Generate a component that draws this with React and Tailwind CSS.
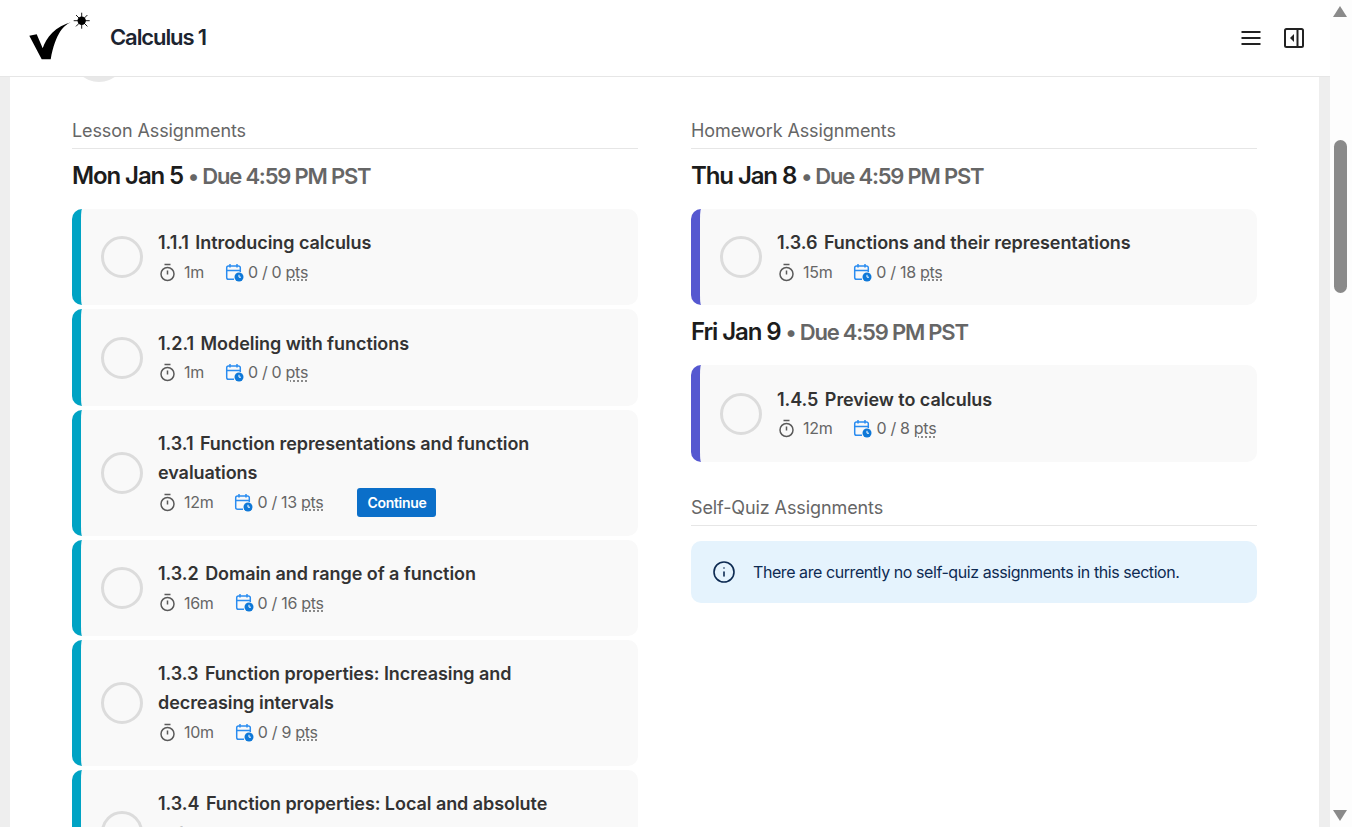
import React from 'react'
import { Info } from 'lucide-react'

const lessons = [
  { num: '1.1.1', title: 'Introducing calculus', time: '1m', pts: '0 / 0' },
  { num: '1.2.1', title: 'Modeling with functions', time: '1m', pts: '0 / 0' },
  { num: '1.3.1', title: 'Function representations and function evaluations', time: '12m', pts: '0 / 13', current: true },
  { num: '1.3.2', title: 'Domain and range of a function', time: '16m', pts: '0 / 16' },
  { num: '1.3.3', title: 'Function properties: Increasing and decreasing intervals', time: '10m', pts: '0 / 9' },
  { num: '1.3.4', title: 'Function properties: Local and absolute extrema', time: '14m', pts: '0 / 14' },
]

function Logo() {
  return (
    <svg width="64" height="48" viewBox="0 0 64 48" className="shrink-0 overflow-visible">
      <path d="M0.300 21.700 L7.700 20.300 L13.700 34.300 C17 24 26 12 43.700 7.700 C35 10 26.500 19 21.700 45.300 L12.700 45.300 Z" fill="#000" />
      <g stroke="#000" strokeWidth="0.900">
        <path d="M52.700 -1.300 L52.700 14.700" />
        <path d="M44.700 6.700 L60.700 6.700" />
        <path d="M47 1 L58.400 12.400" />
        <path d="M58.400 1 L47 12.400" />
      </g>
      <circle cx="52.700" cy="6.700" r="4.200" fill="#000" />
    </svg>
  )
}

function TimerIcon() {
  return (
    <svg width="19" height="19" viewBox="0 0 19 19" fill="none" stroke="#5a5a5a" strokeWidth="1.500" className="shrink-0">
      <path d="M6.500 1.500 H12.500" />
      <circle cx="9.500" cy="11" r="6.500" />
      <path d="M9.500 7.500 V11.500" />
    </svg>
  )
}

function CalendarIcon() {
  return (
    <svg width="19" height="19" viewBox="0 0 19 19" fill="none" className="shrink-0">
      <path d="M9 16.200 H3.500 A1.800 1.800 0 0 1 1.700 14.400 V4.800 A1.800 1.800 0 0 1 3.500 3 H13.500 A1.800 1.800 0 0 1 15.300 4.800 V9" stroke="#2a8cf0" strokeWidth="1.500" />
      <path d="M1.700 7.500 H15.300 M5 1 V4.500 M12 1 V4.500" stroke="#2a8cf0" strokeWidth="1.500" />
      <circle cx="14" cy="14" r="4.500" fill="#0e78d8" />
      <path d="M14 11.800 V14.200 H16" stroke="#fff" strokeWidth="1" />
    </svg>
  )
}

function Card({ item, bar }) {
  return (
    <div className={`flex rounded-[10px] overflow-hidden bg-[#f9f9f9] border-l-[9px] ${bar}`}>
      <div className="flex items-center pl-5 pr-[15px]">
        <div className="w-[42px] h-[42px] rounded-full border-[3.5px] border-[#dcdcdc] shrink-0" />
      </div>
      <div className="flex-1 pt-[19.3px] pb-[18.95px] pr-[72px]">
        <div className="text-[18px] leading-[29.2px] font-semibold text-[#333] tracking-[-0.06px]">
          <span className="mr-[6.5px]">{item.num}</span>{item.title}
        </div>
        <div className="flex items-center h-[29px] text-[16px] text-[#666] tracking-[-0.3px]">
          <TimerIcon />
          <span className="ml-[7px]">{item.time}</span>
          <span className="ml-[21px]"><CalendarIcon /></span>
          <span className="ml-[4px]">{item.pts} <span className="underline decoration-dotted underline-offset-2">pts</span></span>
          {item.current && (
            <button className="ml-[34px] h-[29px] w-[79px] rounded-[3px] bg-[#0b6fc9] text-white text-[14px] font-semibold">Continue</button>
          )}
        </div>
      </div>
    </div>
  )
}

function SectionTitle({ children }) {
  return <h2 className="text-[18px] leading-[27px] text-[#666] border-b border-[#e6e6e6] pb-[4px] tracking-[-0.1px]">{children}</h2>
}

function DueHeading({ day }) {
  return (
    <h3 className="text-[24px] leading-[36px] font-semibold text-[#1c1c1c] tracking-[-1.1px]">
      {day} <span className="text-[22px] font-semibold text-[#666] tracking-[-1.2px]">• Due 4:59 PM PST</span>
    </h3>
  )
}

export default function App() {
  return (
    <div className="flex h-[827px] overflow-hidden bg-white font-['Inter',sans-serif]">
      <div className="flex flex-col w-[1330px] h-full">
        <header className="flex items-center h-[77px] shrink-0 border-b border-[#e6e6e6] bg-white pl-[29px] pr-[26px]">
          <Logo />
          <span className="ml-[17px] -mt-[2px] text-[22px] font-semibold text-[#1c2430] tracking-[-1.1px]">Calculus 1</span>
          <div className="ml-auto flex items-center gap-[23px]">
            <svg width="20" height="14" viewBox="0 0 20 14" fill="none" stroke="#222" strokeWidth="1.800">
              <path d="M0.500 1 H19.500 M0.500 7 H19.500 M0.500 13 H19.500" />
            </svg>
            <svg width="20" height="20" viewBox="0 0 20 20" fill="none">
              <rect x="1" y="1" width="18" height="18" rx="1.500" stroke="#222" strokeWidth="2" />
              <path d="M13.500 1 V19" stroke="#222" strokeWidth="2" />
              <path d="M10 6 V14 L6 10 Z" fill="#222" />
            </svg>
          </div>
        </header>

        <div className="flex-1 min-h-0 overflow-hidden bg-[#eeeeee] pl-[10px] pr-[11px]">
          <div className="h-full bg-white overflow-hidden px-[62px]">
            <div className="h-[5px] overflow-hidden">
              <div className="w-[54px] h-[54px] rounded-full bg-[#e8e8e8] -mt-[49px]" />
            </div>
            <div className="grid grid-cols-2 gap-x-[53px] pt-[35px]">
              <div className="min-w-0">
                <SectionTitle>Lesson Assignments</SectionTitle>
                <div className="mt-[9px] mb-[15px]"><DueHeading day="Mon Jan 5" /></div>
                <div className="flex flex-col gap-1">
                  {lessons.map(l => <Card key={l.num} item={l} bar="border-[#00a3c4]" />)}
                </div>
              </div>
              <div className="min-w-0">
                <SectionTitle>Homework Assignments</SectionTitle>
                <div className="mt-[9px] mb-[15px]"><DueHeading day="Thu Jan 8" /></div>
                <Card item={{ num: '1.3.6', title: 'Functions and their representations', time: '15m', pts: '0 / 18' }} bar="border-[#5558d0]" />
                <div className="mt-[9px] mb-[15px]"><DueHeading day="Fri Jan 9" /></div>
                <Card item={{ num: '1.4.5', title: 'Preview to calculus', time: '12m', pts: '0 / 8' }} bar="border-[#5558d0]" />
                <div className="mt-[32px]"><SectionTitle>Self-Quiz Assignments</SectionTitle></div>
                <div className="mt-[15px] h-[62px] flex items-center rounded-[10px] bg-[#e5f3fd] pl-[21px] text-[16px] text-[#0d2a52] tracking-[-0.43px]">
                  <Info size={24} strokeWidth={1.6} className="shrink-0" />
                  <span className="ml-[17px]">There are currently no self-quiz assignments in this section.</span>
                </div>
              </div>
            </div>
          </div>
        </div>
      </div>

      {/* fake browser scrollbar */}
      <div className="flex flex-col items-center w-[22px] h-full bg-[#fdfdfd] py-[6px] pr-[2px]">
        <div className="w-0 h-0 border-x-[7px] border-x-transparent border-b-[11px] border-b-[#8a8a8a]" />
        <div className="w-[13px] h-[153px] mt-[123px] rounded-full bg-[#8a8a8a]" />
        <div className="mt-auto w-0 h-0 border-x-[7px] border-x-transparent border-t-[11px] border-t-[#8a8a8a]" />
      </div>
    </div>
  )
}
